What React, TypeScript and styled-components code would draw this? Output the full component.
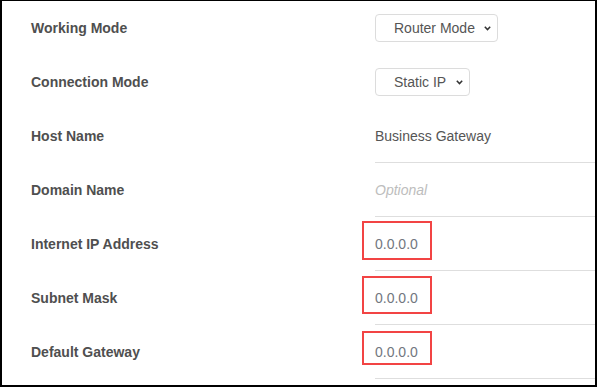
import React from "react";
import styled, { createGlobalStyle } from "styled-components";

const Global = createGlobalStyle`
  html, body { margin: 0; padding: 0; background: #fff; }
  body { font-family: "Liberation Sans", Arial, sans-serif; }
  * { box-sizing: border-box; }
`;

const Frame = styled.div`
  width: 597px;
  height: 387px;
  border: 2px solid #000;
  border-top-width: 1px;
  padding-left: 29px;
  display: flex;
  flex-direction: column;
  background: #fff;
  overflow: hidden;
`;

const Row = styled.div`
  display: grid;
  grid-template-columns: 344px 1fr;
  height: 54px;
`;

const Label = styled.div`
  display: flex;
  align-items: center;
  font-size: 14px;
  font-weight: bold;
  color: #4f4f4f;
`;

const ValueCell = styled.div<{ $underline?: boolean }>`
  position: relative;
  display: flex;
  align-items: center;
  font-size: 14px;
  color: #555;
  border-bottom: ${(p) => (p.$underline ? "1px solid #dedede" : "none")};
`;

const SelectWrap = styled.div`
  position: relative;
  display: inline-flex;
`;

const Select = styled.select`
  appearance: none;
  -webkit-appearance: none;
  height: 28px;
  padding: 0 22px 0 18px;
  border: 1px solid #dcdcdc;
  border-radius: 4px;
  background: #fff;
  font-family: "Liberation Sans", Arial, sans-serif;
  font-size: 14px;
  color: #555;
  outline: none;
`;

const Chevron = styled.svg`
  position: absolute;
  right: 7px;
  top: 50%;
  margin-top: -2px;
  width: 7px;
  height: 5px;
  pointer-events: none;
`;

const Text = styled.span<{ $tone?: "value" | "ip" | "placeholder" }>`
  color: ${(p) =>
    p.$tone === "placeholder" ? "#bdbdbd" : p.$tone === "ip" ? "#727780" : "#555"};
  font-style: ${(p) => (p.$tone === "placeholder" ? "italic" : "normal")};
`;

const Highlight = styled.div<{ $top: number; $height: number }>`
  position: absolute;
  left: -13px;
  top: ${(p) => p.$top}px;
  width: 70px;
  height: ${(p) => p.$height}px;
  border: 2px solid #f24444;
  pointer-events: none;
`;

function Dropdown({ value }: { value: string }) {
  return (
    <SelectWrap>
      <Select defaultValue={value}>
        <option value={value}>{value}</option>
      </Select>
      <Chevron viewBox="0 0 7 5">
        <path d="M0.8 0.8 L3.5 3.6 L6.2 0.8" fill="none" stroke="#333" strokeWidth="1.5" />
      </Chevron>
    </SelectWrap>
  );
}

const ipRows = [
  { label: "Internet IP Address", top: 4, height: 39 },
  { label: "Subnet Mask", top: 5, height: 38 },
  { label: "Default Gateway", top: 6, height: 34 },
];

export default function App() {
  return (
    <>
      <Global />
      <Frame>
        <Row>
          <Label>Working Mode</Label>
          <ValueCell>
            <Dropdown value="Router Mode" />
          </ValueCell>
        </Row>
        <Row>
          <Label>Connection Mode</Label>
          <ValueCell>
            <Dropdown value="Static IP" />
          </ValueCell>
        </Row>
        <Row>
          <Label>Host Name</Label>
          <ValueCell $underline>
            <Text $tone="value">Business Gateway</Text>
          </ValueCell>
        </Row>
        <Row>
          <Label>Domain Name</Label>
          <ValueCell $underline>
            <Text $tone="placeholder">Optional</Text>
          </ValueCell>
        </Row>
        {ipRows.map((r) => (
          <Row key={r.label}>
            <Label>{r.label}</Label>
            <ValueCell $underline>
              <Text $tone="ip">0.0.0.0</Text>
              <Highlight $top={r.top} $height={r.height} />
            </ValueCell>
          </Row>
        ))}
      </Frame>
    </>
  );
}
